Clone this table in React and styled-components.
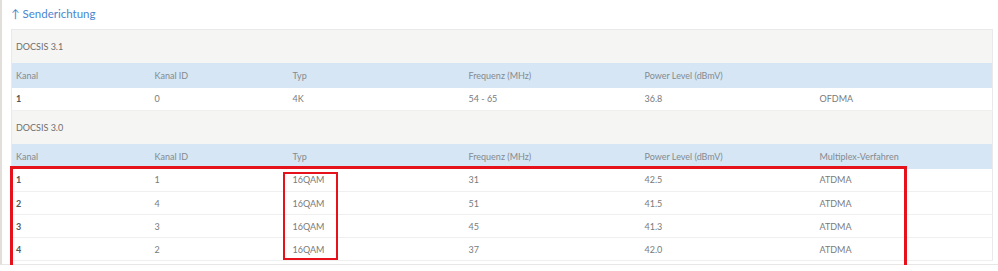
import React from 'react';
import styled, {createGlobalStyle} from 'styled-components';

const GlobalStyle = createGlobalStyle`
    body {
        margin: 0;
        background: #fff;
        font-family: Lato, "Liberation Sans", sans-serif;
    }
`

const Panel = styled.div`
    position: relative;
    width: 998px;
    height: 265px;
    box-sizing: border-box;
    border-left: 2px solid #e2dfdb;
    border-bottom: 1px solid #e6e6e6;
    padding: 4px 6px 0 9px;
`

const Title = styled.h3`
    margin: 0 0 6px 0;
    height: 19px;
    font-size: 11.5px;
    font-weight: normal;
    line-height: 19px;
    color: #4a86d0;
`

const Table = styled.table`
    width: 981px;
    border-collapse: collapse;
    table-layout: fixed;
    font-size: 9px;
    color: #7a7a7a;
    border: 1px solid #e9e9e9;
`

const GroupRow = styled.tr`
    height: 33px;
    background: #f5f5f3;
    td {
        color: #6f6f6f;
        padding: 0 4px;
    }
`

const HeadRow = styled.tr`
    height: 25px;
    background: #d6e6f4;
    th {
        text-align: left;
        font-weight: normal;
        color: #858a8f;
        padding: 0 4px;
    }
`

const Row = styled.tr`
    height: 23px;
    background: #fff;
    border-bottom: 1px solid #efefef;
    td {
        padding: 0 4px;
    }
    td:first-child {
        color: #555;
        font-weight: bold;
    }
`

const Mark = styled.div`
    position: absolute;
    box-sizing: border-box;
    border: ${props => props.thick}px solid #e5121c;
    pointer-events: none;
`

const widths = [139, 138, 176, 176, 175, 177];

const upstream31 = [['1', '0', '4K', '54 - 65', '36.8', 'OFDMA']];
const upstream30 = [
    ['1', '1', '16QAM', '31', '42.5', 'ATDMA'],
    ['2', '4', '16QAM', '51', '41.5', 'ATDMA'],
    ['3', '3', '16QAM', '45', '41.3', 'ATDMA'],
    ['4', '2', '16QAM', '37', '42.0', 'ATDMA']
];

const Group = ({name, last, rows}) => (
    <>
        <GroupRow><td colSpan={6}>{name}</td></GroupRow>
        <HeadRow>
            <th>Kanal</th>
            <th>Kanal ID</th>
            <th>Typ</th>
            <th>Frequenz (MHz)</th>
            <th>Power Level (dBmV)</th>
            <th>{last}</th>
        </HeadRow>
        {rows.map((r, i) => (
            <Row key={i}>
                {r.map((c, j) => <td key={j}>{c}</td>)}
            </Row>
        ))}
    </>
)

export default function App() {
    return (
        <>
            <GlobalStyle />
            <Panel>
                <Title>↑ Senderichtung</Title>
                <Table>
                    <colgroup>
                        {widths.map((w, i) => <col key={i} style={{width: w}} />)}
                    </colgroup>
                    <tbody>
                        <Group name="DOCSIS 3.1" last="" rows={upstream31} />
                        <Group name="DOCSIS 3.0" last="Multiplex-Verfahren" rows={upstream30} />
                    </tbody>
                </Table>
                <Mark thick={3} style={{left: 8, top: 166, width: 897, height: 103}} />
                <Mark thick={2} style={{left: 281, top: 172, width: 55, height: 88}} />
            </Panel>
        </>
    );
}
